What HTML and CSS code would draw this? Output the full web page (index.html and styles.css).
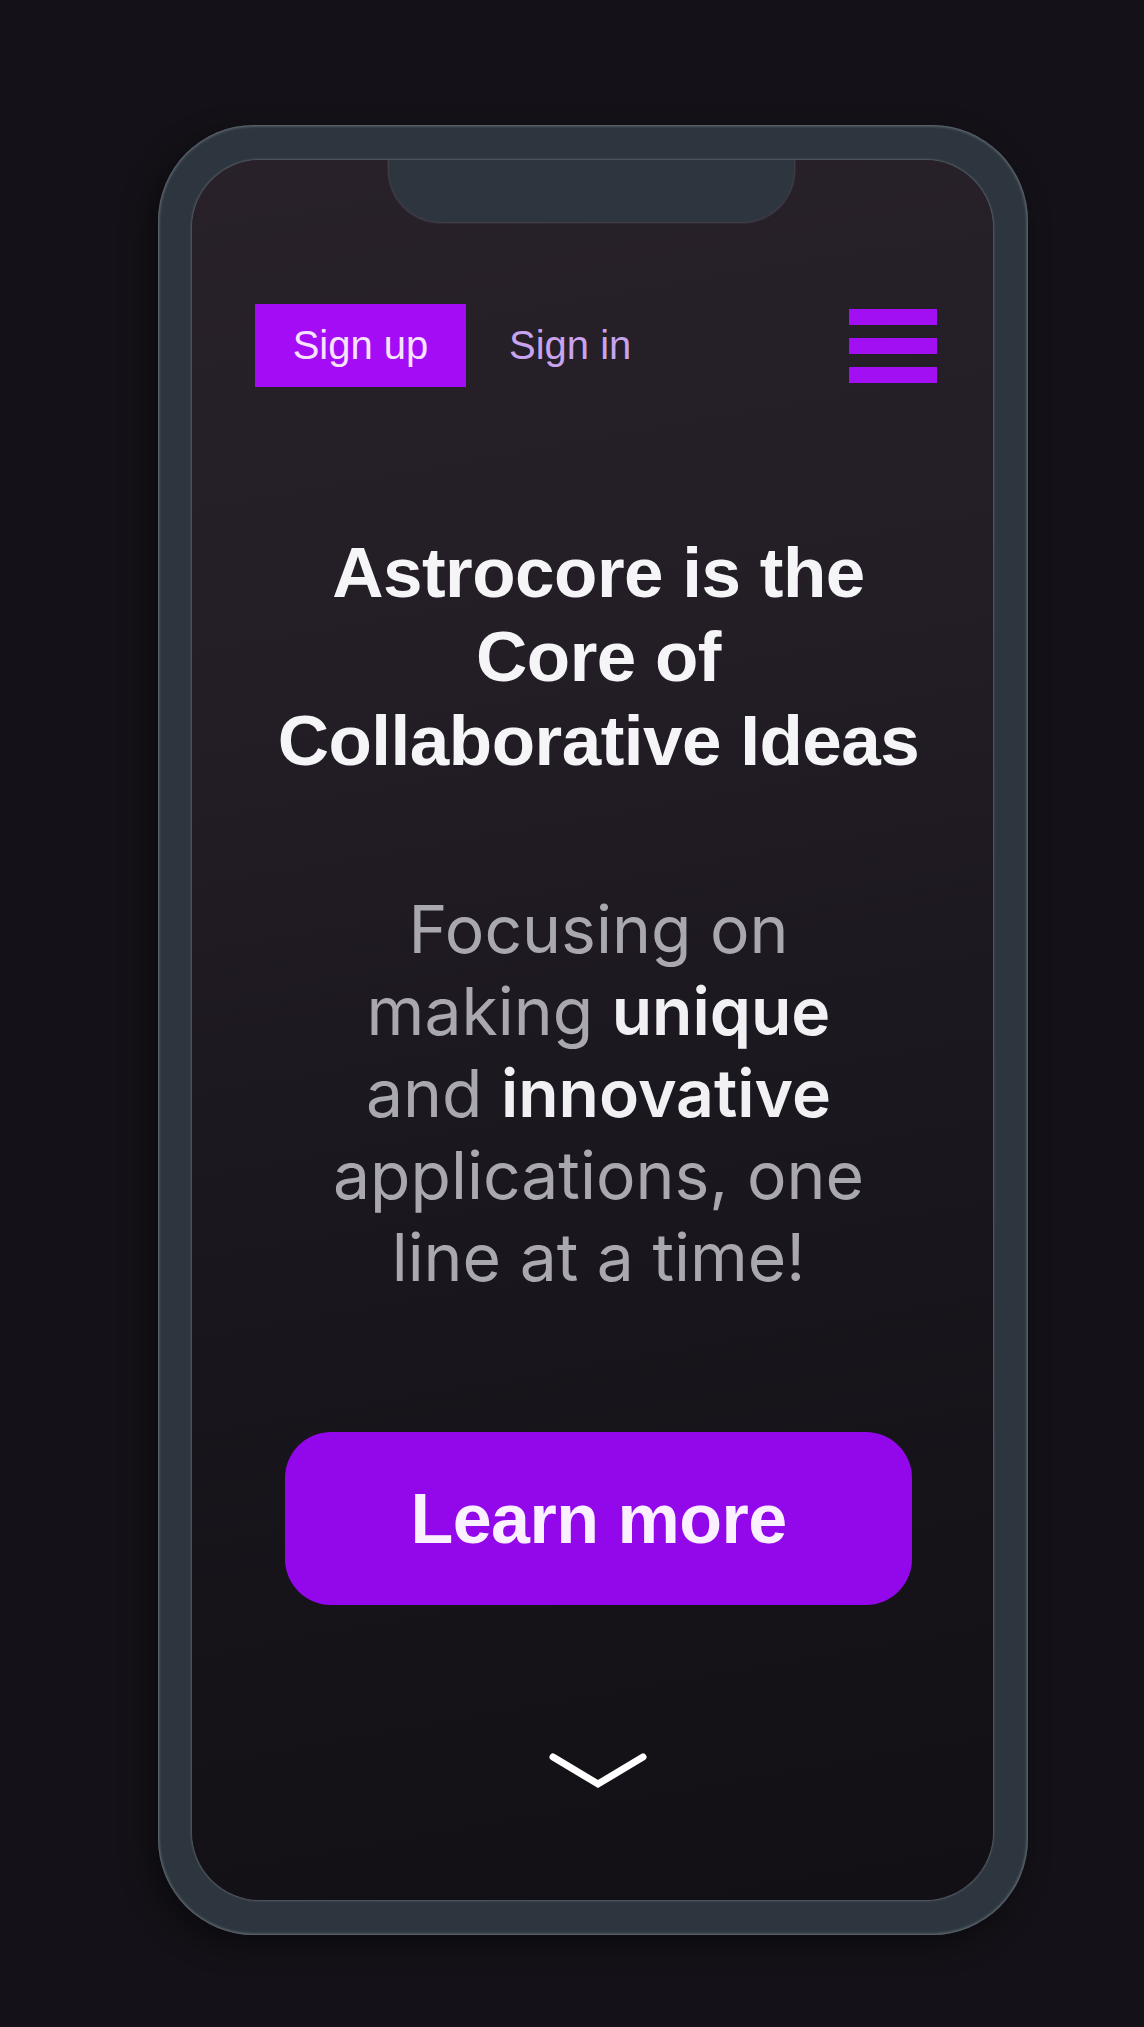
FILE: index.html
```
<!DOCTYPE html>
<html lang="en">
<head>
<meta charset="utf-8">
<title>Astrocore</title>
<link rel="stylesheet" href="styles.css">
</head>
<body>
<div class="stage">
  <div class="phone">
    <div class="screen">
      <div class="notch"></div>
      <nav class="nav">
        <div class="auth">
          <a class="signup" href="#">Sign up</a>
          <a class="signin" href="#">Sign in</a>
        </div>
        <button class="burger" aria-label="Menu">
          <span></span><span></span><span></span>
        </button>
      </nav>
      <main class="hero">
        <h1 class="title">Astrocore is the Core of Collaborative Ideas</h1>
        <p class="lead">Focusing on making <strong>unique</strong> and <strong>innovative</strong> applications, one line at a time!</p>
        <a class="cta" href="#">Learn more</a>
        <svg class="chevron" width="100" height="42" viewBox="0 0 100 42">
          <polyline points="4,5 49,32 94,5" fill="none" stroke="#ffffff" stroke-width="7" stroke-linecap="round" stroke-linejoin="miter"/>
        </svg>
      </main>
    </div>
  </div>
</div>
</body>
</html>
```
FILE: styles.css
```
html, body {
  margin: 0;
  padding: 0;
  background: #141218;
}
body {
  font-family: "Liberation Sans", Arial, sans-serif;
  color: #f4f4f6;
}
.stage {
  padding: 125px 0 92px 158px;
}
.phone {
  width: 870px;
  height: 1810px;
  box-sizing: border-box;
  padding: 35px 35px 35px 34px;
  background: #2d363e;
  border-radius: 96px;
  box-shadow: inset 0 0 3px 1px rgba(160, 170, 178, 0.55), -8px 10px 30px rgba(0, 0, 0, 0.45);
}
.screen {
  position: relative;
  height: 1740px;
  border-radius: 68px;
  overflow: hidden;
  background: linear-gradient(170deg, #282129 0%, #231d26 30%, #18151c 65%, #121015 100%);
  box-shadow: 0 0 2px 1px rgba(170, 165, 180, 0.35);
  display: flex;
  flex-direction: column;
}
.notch {
  position: absolute;
  top: 0;
  left: 197px;
  width: 405px;
  height: 62px;
  background: #2d363e;
  border-radius: 0 0 52px 52px;
  box-shadow: 0 0 2px 1px rgba(150, 140, 160, 0.35);
}
.nav {
  display: flex;
  align-items: center;
  justify-content: space-between;
  padding: 144px 56px 0 63px;
}
.auth {
  display: flex;
  align-items: center;
  gap: 43px;
}
.signup {
  display: flex;
  align-items: center;
  justify-content: center;
  width: 211px;
  height: 83px;
  background: #a50cf6;
  color: #f7e2ff;
  font-size: 40px;
  text-decoration: none;
}
.signin {
  color: #c8a4ee;
  font-size: 40px;
  text-decoration: none;
}
.burger {
  display: flex;
  flex-direction: column;
  gap: 13px;
  padding: 0;
  border: 0;
  background: none;
}
.burger span {
  display: block;
  width: 88px;
  height: 16px;
  background: #a20ff3;
}
.hero {
  display: flex;
  flex-direction: column;
  align-items: center;
  padding-left: 12px;
}
.title {
  width: 690px;
  margin: 144px 0 0;
  font-size: 71px;
  line-height: 84px;
  font-weight: 700;
  text-align: center;
  letter-spacing: -0.5px;
  color: #f5f5f7;
}
.lead {
  width: 560px;
  margin: 105px 0 0;
  font-family: Inter, "Noto Sans", sans-serif;
  font-size: 66px;
  line-height: 82px;
  text-align: center;
  color: #a9a8ae;
}
.lead strong {
  font-weight: 600;
  color: #f1f0f3;
}
.cta {
  display: flex;
  align-items: center;
  justify-content: center;
  width: 627px;
  height: 173px;
  margin-top: 134px;
  border-radius: 46px;
  background: #9308ea;
  color: #fbf0ff;
  font-size: 70px;
  font-weight: 700;
  letter-spacing: -0.5px;
  text-decoration: none;
}
.chevron {
  display: block;
  margin-top: 147px;
}
```
